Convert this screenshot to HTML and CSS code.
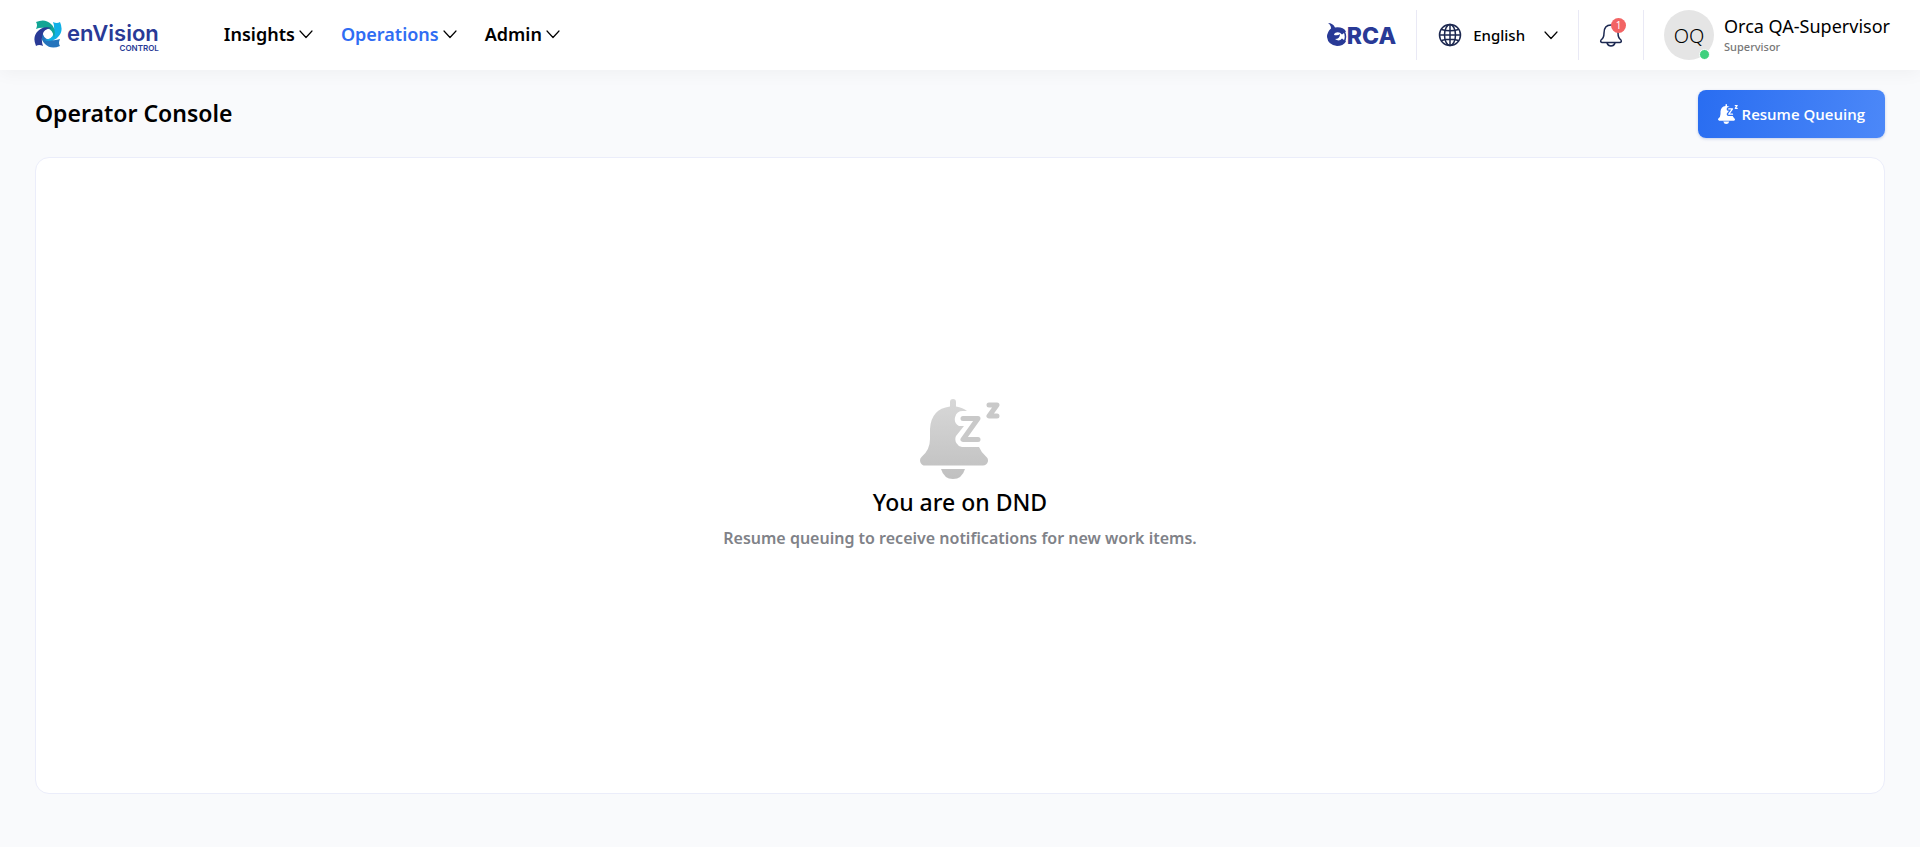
FILE: index.html
```html
<!DOCTYPE html>
<html lang="en">
<head>
<meta charset="utf-8">
<title>Operator Console</title>
<link rel="stylesheet" href="styles.css">
</head>
<body>
<svg class="defs" width="0" height="0" aria-hidden="true">
  <defs>
    <linearGradient id="grey" gradientUnits="userSpaceOnUse" x1="0" y1="0" x2="0" y2="80"><stop offset="0" stop-color="#d8d8d8"/><stop offset="1" stop-color="#c0c0c0"/></linearGradient>
    <symbol id="chevron" viewBox="0 0 14 14"><path d="M1 4l6 6.500 6-6.500" fill="none" stroke="currentColor" stroke-width="1.200" stroke-linecap="round" stroke-linejoin="round"/></symbol>
    <symbol id="snooze" viewBox="0 0 80 80">
      <path d="M30 3a3 3 0 0 1 6 0v4.500Q43 8.500 47 12H43a8 8 0 0 0-4 15h5L36 37a8 8 0 0 0 6 11h17q2 5 7 9.500a5 5 0 0 1-3 9H5a5 5 0 0 1-3.500-8.500Q10 51 10 40V30Q11 10 30 7.500z"/>
      <path d="M21 70h24q-3 10-12 10t-12-10z"/>
      <path d="M43 19.500h15L43 40.500h15" fill="none" stroke="currentColor" stroke-width="5" stroke-linecap="round" stroke-linejoin="round"/>
      <path d="M69 6h8l-8 11h8" fill="none" stroke="currentColor" stroke-width="5" stroke-linecap="round" stroke-linejoin="round"/>
    </symbol>
    <path id="blade" d="M2 2Q11-2 17 4Q22.500 9 20 18Q19 9 13 8.500Q7 7 2 9Q4 5 2 2z"/>
  </defs>
</svg>
<header class="topbar">
  <a class="brand" href="#" aria-label="enVision Control">
    <svg class="brand-mark" viewBox="0 0 28 28" aria-hidden="true">
      <use href="#blade" fill="#2474bc" transform="rotate(180 14 14)"/>
      <use href="#blade" fill="#10b0e6" transform="rotate(90 14 14)"/>
      <use href="#blade" fill="#12a594"/>
      <use href="#blade" fill="#293a96" transform="rotate(270 14 14)"/>
    </svg>
    <span class="brand-text"><span class="brand-name">enVision</span><span class="brand-sub">CONTROL</span></span>
  </a>
  <nav class="menu">
    <button class="menu-item" type="button">Insights<svg class="chevron"><use href="#chevron"/></svg></button>
    <button class="menu-item active" type="button">Operations<svg class="chevron"><use href="#chevron"/></svg></button>
    <button class="menu-item" type="button">Admin<svg class="chevron"><use href="#chevron"/></svg></button>
  </nav>
  <div class="tools">
    <a class="orca" href="#" aria-label="Orca">
      <svg class="orca-mark" viewBox="0 0 20 23" aria-hidden="true"><path fill="#293a96" d="M1 0q5 0 7 4.500 8-1 11 4l-4 3Q12 8 8 10q-1 1-1 2 4 1 6-1 0 5-5 5 4 3 7-.5l4 3Q16 23 10 23 1 22 0 14q0-5 4-8.500Q4 2 1 0z"/><path fill="none" stroke="#293a96" stroke-width="1.500" d="M17 8q3 6 0 11"/></svg>
      <span>RCA</span>
    </a>
    <button class="language" type="button">
      <svg class="globe" viewBox="0 0 24 24" aria-hidden="true"><g fill="none" stroke="#1c2850" stroke-width="1.500"><circle cx="12" cy="12" r="10.500"/><ellipse cx="12" cy="12" rx="5.500" ry="10.500"/><path d="M12 1.500v21M1.500 12h21M3.500 6.500q8.500 2.500 17 0M3.500 17.500q8.500-2.500 17 0"/></g></svg>
      <span class="language-name">English</span>
      <svg class="chevron"><use href="#chevron"/></svg>
    </button>
    <button class="alerts" type="button" aria-label="Notifications">
      <svg class="bell" viewBox="0 0 24 24" aria-hidden="true"><path d="M12 2Q5 2 5 10q0 5-3 7-1 2 1 2.500h18q2-.5 1-2.500-3-2-3-7 0-8-7-8zM8 20q1 3 4 3t4-3" fill="none" stroke="#1c2850" stroke-width="1.500" stroke-linejoin="round"/></svg>
      <span class="badge">1</span>
    </button>
    <div class="user">
      <div class="avatar">OQ<span class="status"></span></div>
      <div class="user-text"><span class="user-name">Orca QA-Supervisor</span><span class="user-role">Supervisor</span></div>
    </div>
  </div>
</header>
<main class="page">
  <div class="page-head">
    <h1>Operator Console</h1>
    <button class="resume" type="button"><svg class="resume-icon" aria-hidden="true"><use href="#snooze"/></svg>Resume Queuing</button>
  </div>
  <section class="panel">
    <svg class="panel-icon" aria-hidden="true"><use href="#snooze"/></svg>
    <h2>You are on DND</h2>
    <p>Resume queuing to receive notifications for new work items.</p>
  </section>
</main>
</body>
</html>
```
FILE: styles.css
```css
* { box-sizing: border-box; }
body { margin: 0; min-height: 100vh; display: flex; flex-direction: column; background: #f9fafc; color: #000; font-family: "Noto Sans", "Open Sans", sans-serif; }
button { border: 0; padding: 0; background: none; color: inherit; font: inherit; }
a { text-decoration: none; }
h1, h2, p { margin: 0; }
.defs { position: absolute; }
.topbar { height: 70px; display: flex; align-items: center; padding: 0 30px 0 34px; background: #fff; box-shadow: 0 4px 16px rgba(0, 0, 0, .04); }
.brand { display: flex; align-items: center; gap: 5px; color: #293a96; font-family: Inter, sans-serif; }
.brand-mark { width: 28px; height: 28px; margin-bottom: 3px; }
.brand-text { display: flex; flex-direction: column; padding-top: 3px; }
.brand-name { font-size: 22px; line-height: 22px; font-weight: 600; }
.brand-sub { align-self: flex-end; font-size: 8px; line-height: 8px; font-weight: 600; }
.menu { display: flex; gap: 28px; margin-left: 65px; }
.menu-item { display: flex; align-items: center; gap: 4px; font-size: 18px; line-height: 24px; font-weight: 600; padding-bottom: 2px; }
.active { color: #2f6df3; }
.chevron { width: 14px; height: 14px; color: #000; }
.tools { display: flex; align-items: center; margin-left: auto; }
.orca { display: flex; align-items: center; padding-top: 2px; margin-right: 20px; color: #293a96; font: 800 23px/24px Inter, sans-serif; }
.orca-mark { width: 20px; height: 23px; margin-bottom: 3px; }
.language { display: flex; align-items: center; height: 50px; padding: 0 20px 0 21px; border-left: 1px solid #e9e9f5; font-size: 15px; font-weight: 500; }
.globe { width: 24px; height: 24px; margin-right: 11px; }
.language-name { margin-right: 19px; }
.alerts { position: relative; height: 50px; padding: 0 20px; border: solid #e9e9f5; border-width: 0 1px; }
.bell { display: block; width: 24px; height: 24px; }
.badge { position: absolute; top: 8px; right: 17px; width: 15px; height: 15px; border-radius: 50%; background: #f26464; color: #fff; font-size: 10px; line-height: 15px; text-align: center; }
.user { display: flex; align-items: center; gap: 10px; margin-left: 20px; }
.avatar { position: relative; width: 50px; height: 50px; border-radius: 50%; background: #e5e5e5; font-size: 20px; line-height: 52px; font-weight: 300; text-align: center; }
.status { position: absolute; right: 4px; bottom: 0; width: 11px; height: 11px; border: 1px solid #fff; border-radius: 50%; background: #3fd07d; }
.user-text { display: flex; flex-direction: column; }
.user-name { font-size: 18px; line-height: 24px; font-weight: 400; }
.user-role { font-size: 11px; line-height: 18px; font-weight: 500; color: #777; }
.page { flex: 1; display: flex; flex-direction: column; padding: 20px 35px 53px; }
.page-head { display: flex; align-items: center; justify-content: space-between; margin-bottom: 19px; }
h1 { font-size: 23px; line-height: 32px; font-weight: 600; padding-bottom: 2px; }
.resume { display: flex; align-items: center; gap: 4px; height: 48px; padding: 0 20px; border-radius: 8px; background: linear-gradient(100deg, #296df1, #4c88f8); color: #fff; font-family: "Open Sans", "Noto Sans", sans-serif; font-size: 15px; font-weight: 600; box-shadow: 0 1px 3px rgba(40, 80, 180, .25); }
.resume-icon { width: 20px; height: 20px; fill: #fff; }
.panel { flex: 1; display: flex; flex-direction: column; align-items: center; justify-content: center; padding-bottom: 2px; border: 1px solid #ebedfa; border-radius: 14px; background: #fff; }
.panel-icon { width: 80px; height: 80px; fill: url(#grey); color: #c9c9c9; }
h2 { margin-top: 7px; font-size: 23px; line-height: 32px; font-weight: 500; }
.panel p { margin-top: 8px; font-size: 16px; line-height: 24px; font-weight: 600; color: #808288; }
```
